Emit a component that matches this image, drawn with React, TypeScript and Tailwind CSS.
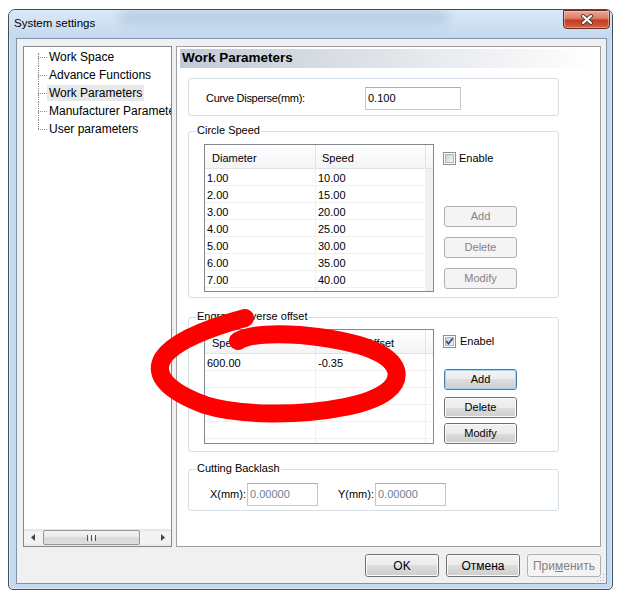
import React from 'react';

// Windows 7 style "System settings" dialog with a red hand-drawn mark on top

const treeItems = ['Work Space', 'Advance Functions', 'Work Parameters', 'Manufacturer Parameters', 'User parameters'];

const circleRows = [
  ['1.00', '10.00'],
  ['2.00', '15.00'],
  ['3.00', '20.00'],
  ['4.00', '25.00'],
  ['5.00', '30.00'],
  ['6.00', '35.00'],
  ['7.00', '40.00'],
];

function WinButton({
  children,
  disabled,
  focused,
  className = '',
}: {
  children: React.ReactNode;
  disabled?: boolean;
  focused?: boolean;
  className?: string;
}) {
  if (disabled) {
    return (
      <div className={`flex items-center justify-center rounded-[3px] border border-[#adb2b5] bg-[#f4f4f4] text-[#838383] ${className}`}>
        {children}
      </div>
    );
  }
  return (
    <div className={`rounded-[3px] border ${focused ? 'border-[#3c7fb1]' : 'border-[#707070]'} ${className}`}>
      <div
        className={`flex h-full w-full items-center justify-center rounded-[2px] border ${
          focused ? 'border-[#9fd5f3]' : 'border-[#fbfbfb]'
        } bg-[linear-gradient(#f2f2f2_0%,#ebebeb_50%,#dddddd_50%,#cfcfcf_100%)]`}
      >
        {children}
      </div>
    </div>
  );
}

function CheckBox({ checked }: { checked?: boolean }) {
  return (
    <div className="flex h-[13px] w-[13px] shrink-0 items-center justify-center border border-[#8f8f8f] bg-white">
      <div className="flex h-[9px] w-[9px] items-center justify-center border border-[#b0b5bb] bg-[linear-gradient(135deg,#cdd1d7,#f6f6f6)]">
        {checked && (
          <svg width="9" height="9" viewBox="0 0 9 9" className="shrink-0">
            <path d="M1.2 4.2 L3.5 6.7 L7.8 1.3" fill="none" stroke="#2f4a92" strokeWidth="1.7" />
          </svg>
        )}
      </div>
    </div>
  );
}

function Group({ label, className = '', children }: { label?: string; className?: string; children: React.ReactNode }) {
  return (
    <div className={`relative ml-[11px] w-[371px] rounded-[3px] border border-[#d5dfe5] ${className}`}>
      {label && <span className="absolute -top-[8px] left-[7px] bg-white px-[1px] leading-[13px]">{label}</span>}
      {children}
    </div>
  );
}

function ListView({
  heads,
  headPad2,
  rows,
  rowCount,
  height,
  grayStrip,
}: {
  heads: [string, string];
  headPad2: string;
  rows: string[][];
  rowCount: number;
  height: string;
  grayStrip?: boolean;
}) {
  const data = Array.from({ length: rowCount }, (_, i) => rows[i] ?? ['', '']);
  return (
    <div className={`flex w-[230px] shrink-0 flex-col overflow-hidden border border-[#828790] bg-white ${height}`}>
      <div className="flex h-[24px] shrink-0 border-b border-[#e2e3e5] bg-[linear-gradient(#ffffff,#f3f4f6)]">
        <div className="flex w-[111px] items-center border-r border-[#e2e3e5] pl-[7px] pt-[3px]">{heads[0]}</div>
        <div className={`flex w-[110px] items-center border-r border-[#e2e3e5] pt-[3px] ${headPad2}`}>{heads[1]}</div>
        <div className="flex-1" />
      </div>
      <div className="flex flex-1 flex-col">
        {data.map((r, i) => (
          <div key={i} className="flex h-[17px] shrink-0">
            <div className="w-[111px] border-b border-r border-[#f0f0f0] pl-[2px] pt-[2px] leading-[14px]">{r[0]}</div>
            <div className="w-[110px] border-b border-r border-[#f0f0f0] pl-[2px] pt-[2px] leading-[14px]">{r[1]}</div>
            {grayStrip ? <div className="flex-1 bg-[#f0f0f0]" /> : <div className="flex-1 border-b border-[#f0f0f0]" />}
          </div>
        ))}
        <div className="flex flex-1">
          <div className="w-[111px] border-r border-[#f0f0f0]" />
          <div className="w-[110px] border-r border-[#f0f0f0]" />
          {grayStrip ? <div className="flex-1 bg-[#f0f0f0]" /> : <div className="flex-1" />}
        </div>
      </div>
    </div>
  );
}

function Tree() {
  return (
    <div className="flex w-[149px] shrink-0 flex-col overflow-hidden border border-[#828790] bg-white text-[12px]">
      <div className="flex-1 pt-[1px]">
        {treeItems.map((t, i) => {
          const first = i === 0;
          const last = i === treeItems.length - 1;
          const sel = t === 'Work Parameters';
          return (
            <div key={t} className="flex h-[18px] pl-[14px]">
              <div className="flex w-[9px] shrink-0 flex-col">
                {first ? (
                  <div className="mt-[5px] h-[4px] border-l border-dotted border-[#8c8c8c]" />
                ) : (
                  <div className="h-[9px] border-l border-dotted border-[#8c8c8c]" />
                )}
                <div className="border-t border-dotted border-[#8c8c8c]" />
                {!last && <div className="flex-1 border-l border-dotted border-[#8c8c8c]" />}
              </div>
              <div className="flex items-center">
                <span className={`whitespace-nowrap px-[2px] leading-[16px] ${sel ? 'bg-[#e8e8e8]' : ''}`}>{t}</span>
              </div>
            </div>
          );
        })}
      </div>
      {/* horizontal scrollbar */}
      <div className="flex h-[17px] shrink-0 items-center bg-[linear-gradient(#e4e4e4,#f3f3f3_20%,#f3f3f3_80%,#e8e8e8)]">
        <div className="flex w-[17px] justify-center">
          <svg width="4" height="7" viewBox="0 0 4 7">
            <path d="M4 0 L0 3.5 L4 7 Z" fill="#454545" />
          </svg>
        </div>
        <div className="ml-[2px] flex h-[15px] w-[97px] items-center justify-center gap-[1px] rounded-[2px] border border-[#979797] bg-[linear-gradient(#f4f4f4,#e9e9e9_45%,#d8d8d8_55%,#dfdfdf)]">
          <div className="h-[6px] w-[1px] bg-[#555]" />
          <div className="h-[6px] w-[1px] bg-[#fff]" />
          <div className="h-[6px] w-[1px] bg-[#555]" />
          <div className="h-[6px] w-[1px] bg-[#fff]" />
          <div className="h-[6px] w-[1px] bg-[#555]" />
        </div>
        <div className="flex-1" />
        <div className="flex w-[17px] justify-center">
          <svg width="4" height="7" viewBox="0 0 4 7">
            <path d="M0 0 L4 3.5 L0 7 Z" fill="#454545" />
          </svg>
        </div>
      </div>
    </div>
  );
}

function TextBox({ value, dim, className = '' }: { value: string; dim?: boolean; className?: string }) {
  return (
    <div
      className={`flex h-[23px] shrink-0 items-center border border-[#c3c7cf] border-t-[#abadb3] bg-white pl-[2px] pb-[1px] ${
        dim ? 'text-[#6f7f92]' : 'text-black'
      } ${className}`}
    >
      {value}
    </div>
  );
}

function WorkParameters() {
  return (
    <div className="flex w-[425px] shrink-0 flex-col border border-[#a0a0a0] bg-white">
      <div className="ml-[3px] mr-[2px] mt-[2px] flex h-[19px] items-center bg-[linear-gradient(to_right,#c2cad5,#ffffff)] pl-[2px] text-[13.5px] font-bold">
        Work Parameters
      </div>

      <Group className="mt-[10px]">
        <div className="flex items-center pb-[5px] pt-[8px]">
          <div className="w-[176px] pl-[17px] tracking-[-0.3px]">Curve Disperse(mm):</div>
          <TextBox value="0.100" className="w-[96px]" />
        </div>
      </Group>

      <Group label="Circle Speed" className="mt-[15px]">
        <div className="flex pb-[5px] pl-[15px] pt-[12px]">
          <ListView heads={['Diameter', 'Speed']} headPad2="pl-[6px]" rows={circleRows} rowCount={7} height="h-[148px]" grayStrip />
          <div className="ml-[9px] flex flex-col">
            <div className="mt-[8px] flex items-center gap-[3px]">
              <CheckBox />
              <span className="leading-[13px]">Enable</span>
            </div>
            <WinButton disabled className="ml-[1px] mt-[41px] h-[21px] w-[73px]">Add</WinButton>
            <WinButton disabled className="ml-[1px] mt-[10px] h-[21px] w-[73px]">Delete</WinButton>
            <WinButton disabled className="ml-[1px] mt-[10px] h-[21px] w-[73px]">Modify</WinButton>
          </div>
        </div>
      </Group>

      <Group label="Engrave reverse offset" className="mt-[19px]">
        <div className="flex pb-[7px] pl-[15px] pt-[11px]">
          <ListView heads={['Speed', 'Offset']} headPad2="pl-[49px]" rows={[['600.00', '-0.35']]} rowCount={5} height="h-[115px]" />
          <div className="ml-[9px] flex flex-col">
            <div className="mt-[6px] flex items-center gap-[4px]">
              <CheckBox checked />
              <span className="leading-[13px]">Enabel</span>
            </div>
            <WinButton focused className="ml-[1px] mt-[21px] h-[21px] w-[73px]">Add</WinButton>
            <WinButton className="ml-[1px] mt-[7px] h-[21px] w-[73px]">Delete</WinButton>
            <WinButton className="ml-[1px] mt-[5px] h-[21px] w-[73px]">Modify</WinButton>
          </div>
        </div>
      </Group>

      <Group label="Cutting Backlash" className="mt-[17px]">
        <div className="flex items-center pb-[4px] pl-[1px] pt-[13px]">
          <div className="w-[57px] pr-[1px] text-right">X(mm):</div>
          <TextBox value="0.00000" dim className="w-[71px]" />
          <div className="w-[57px] pr-[1px] text-right">Y(mm):</div>
          <TextBox value="0.00000" dim className="w-[71px]" />
        </div>
      </Group>
    </div>
  );
}

export default function App() {
  return (
    <div className="relative h-[608px] w-[623px] overflow-hidden bg-white pl-[8px] pt-[9px] font-['Liberation_Sans',Arial,sans-serif] text-[11px] text-black">
      <div className="flex h-[581px] w-[605px] flex-col rounded-b-[5px] rounded-t-[7px] border border-[#434d58] bg-[#c3d9ef] shadow-[inset_0_0_0_1px_rgba(255,255,255,0.5)]">
        {/* title bar */}
        <div className="relative flex h-[28px] shrink-0 overflow-hidden rounded-t-[6px] bg-[linear-gradient(#dbe8f6,#c3d9ef)]">
          <div className="absolute left-[110px] top-[1px] h-[12px] w-[330px] rounded-full bg-[#9db6d2] opacity-60 blur-[6px]" />
          <div className="relative flex items-center pl-[5px] text-[11.5px] text-black">System settings</div>
          <div className="relative ml-auto mr-[2px] flex h-[19px] w-[47px] items-center justify-center rounded-b-[4px] rounded-t-[1px] border border-[#6b2a1e] bg-[linear-gradient(#e8a897_0%,#d9806a_42%,#c53d22_55%,#d6603f_100%)] shadow-[inset_0_0_0_1px_rgba(255,220,210,0.45)]">
            <svg width="14" height="11" viewBox="0 0 14 11">
              <path d="M3 2 L11 9 M11 2 L3 9" stroke="#4b3a36" strokeWidth="4" strokeLinecap="round" />
              <path d="M3 2 L11 9 M11 2 L3 9" stroke="#ffffff" strokeWidth="2.2" strokeLinecap="round" />
            </svg>
          </div>
        </div>

        {/* client area */}
        <div className="relative ml-[7px] mr-[5px] flex h-[546px] flex-col border border-[#7f93a9] bg-[#f0f0f0] pb-[6px] pl-[6px] pr-[5px] pt-[7px]">
          <div className="flex h-[501px] gap-[4px]">
            <Tree />
            <WorkParameters />
          </div>
          <div className="mt-[7px] flex h-[23px] justify-end gap-[7px] text-[12px]">
            <WinButton className="h-[23px] w-[74px]">OK</WinButton>
            <WinButton className="h-[23px] w-[74px]">Отмена</WinButton>
            <WinButton disabled className="h-[23px] w-[74px]">
              <span>
                При<span className="underline">м</span>енить
              </span>
            </WinButton>
          </div>
          {/* size grip */}
          <svg className="absolute bottom-[1px] right-[1px]" width="10" height="10" viewBox="0 0 10 10">
            <rect x="8" y="2" width="1" height="1" fill="#b0b0b0" />
            <rect x="5" y="5" width="1" height="1" fill="#b0b0b0" />
            <rect x="8" y="5" width="1" height="1" fill="#b0b0b0" />
            <rect x="2" y="8" width="1" height="1" fill="#b0b0b0" />
            <rect x="5" y="8" width="1" height="1" fill="#b0b0b0" />
            <rect x="8" y="8" width="1" height="1" fill="#b0b0b0" />
          </svg>
        </div>
      </div>

      {/* red hand-drawn mark */}
      <svg className="pointer-events-none absolute left-0 top-0" width="623" height="608" viewBox="0 0 623 608">
        <path
          d="M245 318 C 215 326, 175 340, 163 358 C 152 376, 170 392, 205 405 C 240 416, 300 416, 345 407 C 385 399, 400 385, 396 370 C 390 352, 355 340, 300 335 C 270 333, 248 335, 238 341"
          fill="none"
          stroke="#ff0000"
          strokeWidth="18"
          strokeLinecap="round"
          strokeLinejoin="round"
        />
      </svg>
    </div>
  );
}
